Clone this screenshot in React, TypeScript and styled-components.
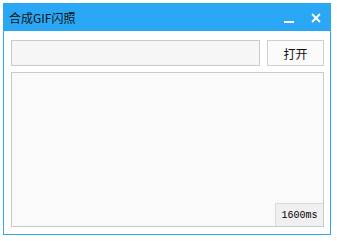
import React from "react";
import styled, { createGlobalStyle } from "styled-components";

const Global = createGlobalStyle`
  html, body { margin: 0; padding: 0; background: #ffffff; }
  body { font-family: "Noto Sans CJK SC", "Liberation Sans", sans-serif; }
`;

const Window = styled.div`
  box-sizing: border-box;
  margin: 3px 0 0 3px;
  width: 328px;
  height: 232px;
  border: 1px solid #2aa8f6;
  background: #ffffff;
  display: flex;
  flex-direction: column;
`;

const TitleBar = styled.div`
  height: 27px;
  background: #2aa8f6;
  display: flex;
  align-items: center;
  padding-left: 5px;
  color: #111;
  font-size: 12px;
`;

const Title = styled.span`
  flex: 1;
  line-height: 12px;
  margin-top: 1px;
`;

const WinButton = styled.button`
  border: 0;
  background: transparent;
  padding: 0;
  width: 20px;
  height: 20px;
  display: flex;
  align-items: center;
  justify-content: center;
  margin-right: ${(p: { $mr: number }) => p.$mr}px;
`;

const Body = styled.div`
  flex: 1;
  display: flex;
  flex-direction: column;
  gap: 6px;
  padding: 9px 6px 7px 7px;
`;

const TopRow = styled.div`
  display: grid;
  grid-template-columns: 1fr 57px;
  column-gap: 7px;
  height: 26px;
`;

const PathInput = styled.div`
  box-sizing: border-box;
  border: 1px solid #cbc8d2;
  background: #f6f6f6;
`;

const OpenButton = styled.div`
  box-sizing: border-box;
  border: 1px solid #cfcfcf;
  background: #fbfbfb;
  display: flex;
  align-items: center;
  justify-content: center;
  font-size: 12px;
  color: #111;
`;

const Preview = styled.div`
  box-sizing: border-box;
  position: relative;
  height: 155px;
  border: 1px solid #cacaca;
  background: #fafafa;
`;

const Duration = styled.div`
  position: absolute;
  right: 0;
  bottom: 0;
  box-sizing: border-box;
  width: 48px;
  height: 23px;
  border-top: 1px solid #dadada;
  border-left: 1px solid #dadada;
  background: #f0f0f0;
  display: flex;
  align-items: center;
  justify-content: center;
  font-family: "Liberation Mono", "DejaVu Sans Mono", monospace;
  font-size: 10px;
  color: #000;
  padding-top: 1px;
`;

export default function App() {
  return (
    <>
      <Global />
      <Window>
        <TitleBar>
          <Title>合成GIF闪照</Title>
          <WinButton $mr={7}>
            <svg width="12" height="12" viewBox="0 0 12 12">
              <rect x="1" y="9" width="10" height="2" fill="#ffffff" />
            </svg>
          </WinButton>
          <WinButton $mr={4}>
            <svg width="12" height="12" viewBox="0 0 12 12">
              <path d="M2 2 L10 10 M10 2 L2 10" stroke="#ffffff" strokeWidth="1.8" />
            </svg>
          </WinButton>
        </TitleBar>
        <Body>
          <TopRow>
            <PathInput />
            <OpenButton>打开</OpenButton>
          </TopRow>
          <Preview>
            <Duration>1600ms</Duration>
          </Preview>
        </Body>
      </Window>
    </>
  );
}
